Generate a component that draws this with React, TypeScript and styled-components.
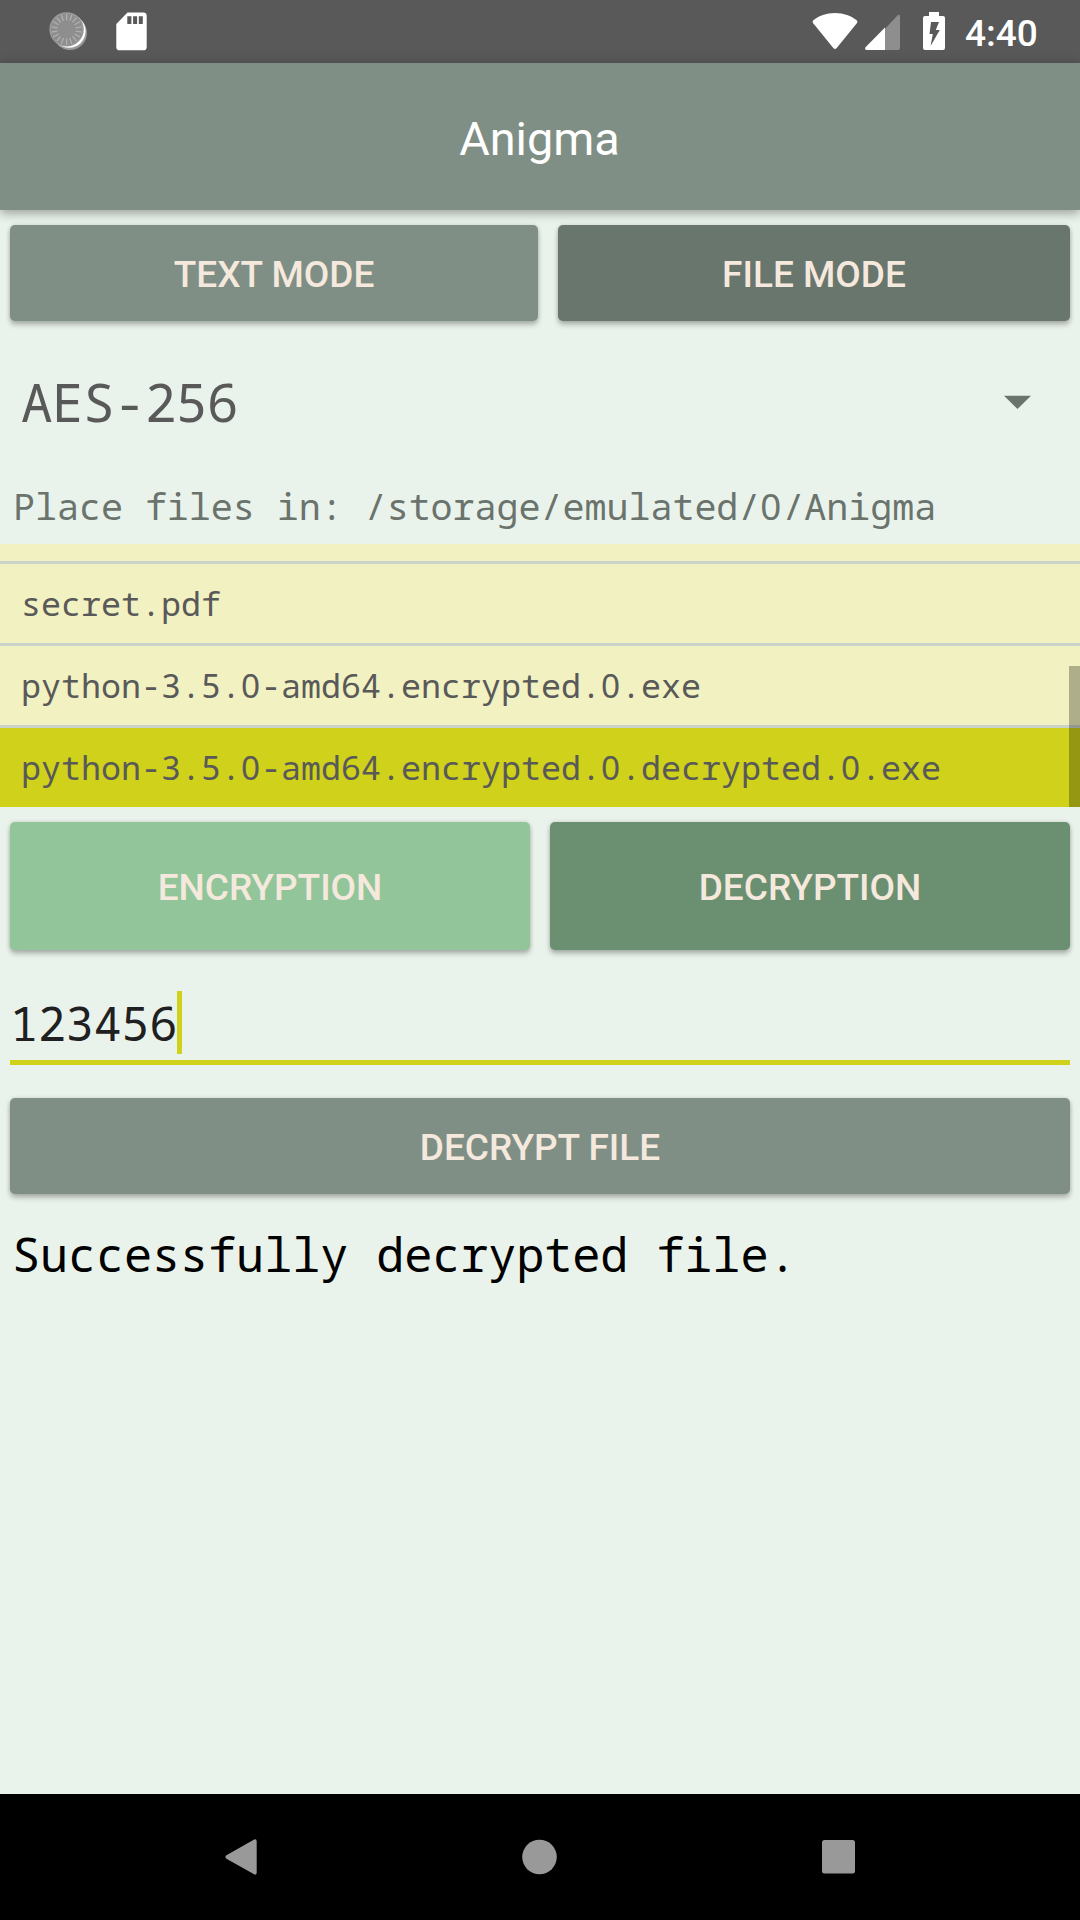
import React from "react";
import styled, { createGlobalStyle } from "styled-components";

const colors = {
  background: "#eaf3eb",
  statusBar: "#595959",
  primary: "#7f8f85",
  primaryDark: "#69766d",
  encrypt: "#92c59a",
  decrypt: "#6a9071",
  accent: "#cfd11a",
  listItem: "#f2f1c1",
  divider: "#ccd3cb",
  buttonText: "#f5e9dd",
  text: "#595959",
};

const mono = `"Droid Sans Mono", "Noto Sans Mono", "DejaVu Sans Mono", monospace`;

const GlobalStyle = createGlobalStyle`
  *, *::before, *::after { box-sizing: border-box; }
  body { margin: 0; background: ${colors.background}; }
`;

const Screen = styled.div`
  display: flex;
  flex-direction: column;
  width: 1080px;
  height: 1920px;
  overflow: hidden;
  background: ${colors.background};
  font-family: Roboto, sans-serif;
  color: ${colors.text};
`;

const StatusBar = styled.header`
  display: flex;
  justify-content: space-between;
  flex: 0 0 63px;
  padding: 0 43px 0 48px;
  background: ${colors.statusBar};
`;

const StatusGroup = styled.div`
  display: flex;
  align-items: center;
`;

const StatusIcon = styled.svg<{ $gap?: number }>`
  display: block;
  height: 63px;
  margin-right: ${(p) => p.$gap ?? 0}px;
`;

const Clock = styled.span`
  width: 72px;
  padding-top: 4px;
  font-size: 37px;
  font-weight: 500;
  line-height: 59px;
  color: #fff;
  white-space: nowrap;
`;

const AppBar = styled.div`
  display: flex;
  align-items: center;
  justify-content: center;
  flex: 0 0 147px;
  padding: 5px 1px 0 0;
  background: ${colors.primary};
  box-shadow: 0 4px 9px rgba(0, 0, 0, 0.26), 0 0 14px rgba(0, 0, 0, 0.1);
`;

const AppTitle = styled.h1`
  margin: 0;
  font-size: 46.8px;
  font-weight: 400;
  line-height: 60px;
  color: #fff;
`;

const Main = styled.main`
  display: flex;
  flex-direction: column;
  flex: 1;
  padding-top: 15px;
`;

const ButtonRow = styled.div<{ $columns: string }>`
  display: grid;
  grid-template-columns: ${(p) => p.$columns};
  column-gap: 20px;
  padding: 0 10px;
`;

const Button = styled.button<{ $color: string; $height: number }>`
  height: ${(p) => p.$height}px;
  padding: 3px 0 0;
  border: 0;
  border-radius: 5px;
  background: ${(p) => p.$color};
  box-shadow: 0 4px 5px rgba(0, 0, 0, 0.24), 0 0 4px rgba(0, 0, 0, 0.14);
  font-family: Roboto, sans-serif;
  font-size: 37px;
  font-weight: 500;
  line-height: 44px;
  color: ${colors.buttonText};
`;

const Spinner = styled.div`
  display: flex;
  align-items: center;
  justify-content: space-between;
  height: 144px;
  margin-top: 9px;
  padding: 0 49px 0 21px;
  font-family: ${mono};
  font-size: 52.5px;
  letter-spacing: -0.5px;
`;

const SpinnerValue = styled.span`
  padding-bottom: 2px;
`;

const Hint = styled.p`
  margin: 0 0 6px;
  padding-left: 13px;
  font-family: ${mono};
  font-size: 36.75px;
  letter-spacing: -0.07px;
  line-height: 64px;
  color: #6b736d;
  white-space: pre;
`;

const FileList = styled.div`
  position: relative;
  display: flex;
  flex-direction: column;
  justify-content: flex-end;
  gap: 3px;
  height: 263px;
  margin-bottom: 15px;
  overflow: hidden;
  background: ${colors.divider};
`;

const FileRow = styled.div<{ $selected?: boolean }>`
  flex: 0 0 79px;
  padding: 0 21px;
  background: ${(p) => (p.$selected ? colors.accent : colors.listItem)};
  font-family: ${mono};
  font-size: 33.33px;
  line-height: 79px;
  white-space: nowrap;
`;

const ScrollThumb = styled.div`
  position: absolute;
  right: 0;
  bottom: 0;
  width: 11px;
  height: 141px;
  background: rgba(0, 0, 0, 0.28);
`;

const PlainZero = styled.span`
  font-family: "Noto Sans", sans-serif;
  letter-spacing: 0.028em;
`;

const KeyField = styled.div`
  display: flex;
  align-items: flex-start;
  height: 74px;
  margin: 41px 10px 33px;
  border-bottom: 5px solid ${colors.accent};
  font-family: ${mono};
  font-size: 46.5px;
  line-height: 65px;
  color: #1f201f;
`;

const Caret = styled.span`
  width: 5px;
  height: 63px;
  background: ${colors.accent};
`;

const Result = styled.p`
  margin: 30px 0 0;
  padding-left: 12px;
  font-family: ${mono};
  font-size: 46.9px;
  letter-spacing: -0.12px;
  line-height: 61px;
  color: #000;
  white-space: nowrap;
`;

const NavBar = styled.nav`
  display: flex;
  align-items: center;
  justify-content: space-between;
  flex: 0 0 126px;
  padding: 0 224px;
  background: #000;
`;

function FileName({ name }: { name: string }) {
  return (
    <>
      {name.split(/(0)/).map((part, i) =>
        part === "0" ? <PlainZero key={i}>0</PlainZero> : part
      )}
    </>
  );
}

const dialTicks = Array.from({ length: 18 }, (_, i) => i * 20);

function DialIcon() {
  return (
    <StatusIcon width="44" viewBox="48 0 44 63" $gap={24}>
      <circle cx="70" cy="33" r="17" fill="#9a9a9a" />
      <circle cx="69" cy="31.2" r="16.6" fill="#fff" />
      <circle cx="66.6" cy="29.4" r="17.2" fill="#9d9d9d" />
      <circle cx="66.6" cy="29.4" r="16" fill="#8e8e8e" />
      {dialTicks.map((angle) => (
        <path
          key={angle}
          d="M66.6 14v6.2"
          stroke="#b2b2b2"
          strokeWidth="1.2"
          transform={`rotate(${angle} 66.6 29.4)`}
        />
      ))}
    </StatusIcon>
  );
}

function SdCardIcon() {
  return (
    <StatusIcon width="31" viewBox="116 0 31 63">
      <path
        fill="#fff"
        fillRule="evenodd"
        d="M127.5 12.4h15.8a3.4 3.4 0 0 1 3.4 3.4v31.100a3.400 3.400 0 0 1-3.400 3.400h-23.600a3.400 3.400 0 0 1-3.400-3.400V24zM127.300 16.300v7.700h4.100v-7.700zM133.100 16.300v7.700h4v-7.700zM138.800 16.300v7.700h4v-7.700z"
      />
    </StatusIcon>
  );
}

function WifiIcon() {
  return (
    <StatusIcon width="46" viewBox="812 0 46 63" $gap={7}>
      <path
        fill="#fff"
        d="M813.3 20.2c5.4-4.3 13-7.2 21.7-7.2s16.300 2.900 21.700 7.200q1.300 1.200.3 2.700L836.700 48.100q-1.700 1.800-3.400 0L813 22.900q-1-1.500.3-2.700z"
      />
    </StatusIcon>
  );
}

function SignalIcon() {
  return (
    <StatusIcon width="35" viewBox="865 0 35 63" $gap={23}>
      <path
        fill="#8e8e8e"
        d="M885 28.700L897.500 15.500q2.500-1.800 2.500 1V48q0 2-2 2H885z"
      />
      <path fill="#fff" d="M885 27.500V50H866.500q-2.400-.6-1-2.800z" />
    </StatusIcon>
  );
}

function BatteryIcon() {
  return (
    <StatusIcon width="22" viewBox="923 0 22 63" $gap={20}>
      <path
        fill="#fff"
        fillRule="evenodd"
        d="M929 12h10v4h4q2 0 2 2v30q0 2-2 2h-18q-2 0-2-2V18q0-2 2-2h4zM931 22l-1.500 12h3.300L930.600 46 939.800 30h-4l3.200-8z"
      />
    </StatusIcon>
  );
}

export default function App() {
  return (
    <Screen>
      <GlobalStyle />
      <StatusBar>
        <StatusGroup>
          <DialIcon />
          <SdCardIcon />
        </StatusGroup>
        <StatusGroup>
          <WifiIcon />
          <SignalIcon />
          <BatteryIcon />
          <Clock>4:40</Clock>
        </StatusGroup>
      </StatusBar>
      <AppBar>
        <AppTitle>Anigma</AppTitle>
      </AppBar>
      <Main>
        <ButtonRow $columns="528px 512px">
          <Button $color={colors.primary} $height={96}>TEXT MODE</Button>
          <Button $color={colors.primaryDark} $height={96}>FILE MODE</Button>
        </ButtonRow>
        <Spinner>
          <SpinnerValue>AES-256</SpinnerValue>
          <svg width="27" height="14" viewBox="0 0 27 14">
            <path d="M0 .8h27L13.500 14z" fill="#6b736d" />
          </svg>
        </Spinner>
        <Hint>
          <FileName name="Place files in: /storage/emulated/0/Anigma" />
        </Hint>
        <FileList>
          <FileRow />
          <FileRow>secret.pdf</FileRow>
          <FileRow>
            <FileName name="python-3.5.0-amd64.encrypted.0.exe" />
          </FileRow>
          <FileRow $selected>
            <FileName name="python-3.5.0-amd64.encrypted.0.decrypted.0.exe" />
          </FileRow>
          <ScrollThumb />
        </FileList>
        <ButtonRow $columns="1fr 1fr">
          <Button $color={colors.encrypt} $height={128}>ENCRYPTION</Button>
          <Button $color={colors.decrypt} $height={128}>DECRYPTION</Button>
        </ButtonRow>
        <KeyField>
          <span>123456</span>
          <Caret />
        </KeyField>
        <ButtonRow $columns="1fr">
          <Button $color={colors.primary} $height={96}>DECRYPT FILE</Button>
        </ButtonRow>
        <Result>Successfully decrypted file.</Result>
      </Main>
      <NavBar>
        <svg width="34" height="38" viewBox="224 1838 34 38">
          <path
            fill="#999"
            d="M254.200 1839.500q2.500-.8 2.500 2v31q0 3-2.600 1.800L226.400 1858.700q-2-1.700 0-3.400z"
          />
        </svg>
        <svg width="36" height="36" viewBox="0 0 36 36">
          <circle cx="17.500" cy="18" r="17.300" fill="#999" />
        </svg>
        <svg width="34" height="34" viewBox="0 0 34 34">
          <rect x="0" y="0" width="33" height="33.500" rx="2.500" fill="#999" />
        </svg>
      </NavBar>
    </Screen>
  );
}
